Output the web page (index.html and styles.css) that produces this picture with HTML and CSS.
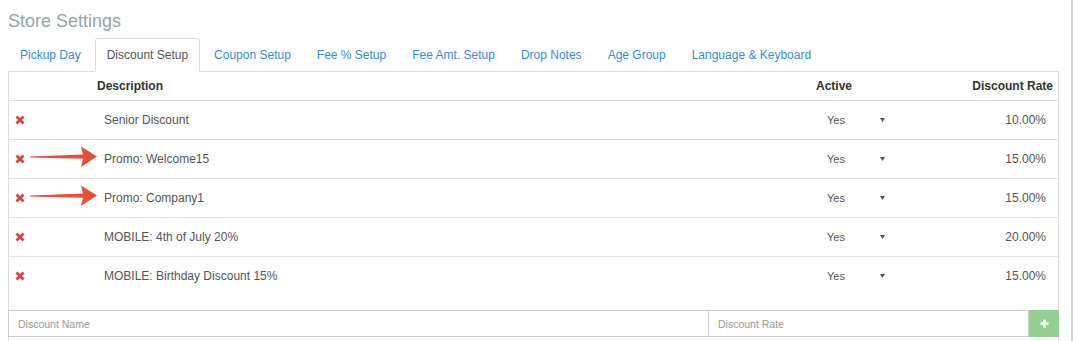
FILE: index.html
```html
<!DOCTYPE html>
<html lang="en">
<head>
    <meta charset="UTF-8">
    <title>Store Settings</title>
    <link rel="stylesheet" href="styles.css">
</head>
<body>
    <div class="page">
        <h1 class="title">Store Settings</h1>

        <ul class="tabs">
            <li><a href="#">Pickup Day</a></li>
            <li class="current"><a href="#">Discount Setup</a></li>
            <li><a href="#">Coupon Setup</a></li>
            <li><a href="#">Fee % Setup</a></li>
            <li><a href="#">Fee Amt. Setup</a></li>
            <li><a href="#">Drop Notes</a></li>
            <li><a href="#">Age Group</a></li>
            <li><a href="#">Language &amp; Keyboard</a></li>
        </ul>

        <div class="panel">
            <div class="row head">
                <div class="cell"></div>
                <div class="cell">Description</div>
                <div class="cell">Active</div>
                <div class="cell rate">Discount Rate</div>
            </div>

            <div class="row">
                <div class="cell del"><svg class="x" viewBox="0 0 10 10"><path d="M1.5 1.5 L8.5 8.5 M8.5 1.5 L1.5 8.5"/></svg></div>
                <div class="cell desc">Senior Discount</div>
                <div class="cell state"><span>Yes</span><svg class="caret" viewBox="0 0 5 4"><path d="M0 0 H5 L2.5 4 Z"/></svg></div>
                <div class="cell rate">10.00%</div>
            </div>

            <div class="row">
                <svg class="arrow" viewBox="0 0 68 22"><path d="M0 10.6 L53 8.6 L51 0.5 L67 10.6 L51 21 L53 12.8 L0 11.4 Z"/></svg>
                <div class="cell del"><svg class="x" viewBox="0 0 10 10"><path d="M1.5 1.5 L8.5 8.5 M8.5 1.5 L1.5 8.5"/></svg></div>
                <div class="cell desc">Promo: Welcome15</div>
                <div class="cell state"><span>Yes</span><svg class="caret" viewBox="0 0 5 4"><path d="M0 0 H5 L2.5 4 Z"/></svg></div>
                <div class="cell rate">15.00%</div>
            </div>

            <div class="row">
                <svg class="arrow" viewBox="0 0 68 22"><path d="M0 10.6 L53 8.6 L51 0.5 L67 10.6 L51 21 L53 12.8 L0 11.4 Z"/></svg>
                <div class="cell del"><svg class="x" viewBox="0 0 10 10"><path d="M1.5 1.5 L8.5 8.5 M8.5 1.5 L1.5 8.5"/></svg></div>
                <div class="cell desc">Promo: Company1</div>
                <div class="cell state"><span>Yes</span><svg class="caret" viewBox="0 0 5 4"><path d="M0 0 H5 L2.5 4 Z"/></svg></div>
                <div class="cell rate">15.00%</div>
            </div>

            <div class="row">
                <div class="cell del"><svg class="x" viewBox="0 0 10 10"><path d="M1.5 1.5 L8.5 8.5 M8.5 1.5 L1.5 8.5"/></svg></div>
                <div class="cell desc">MOBILE: 4th of July 20%</div>
                <div class="cell state"><span>Yes</span><svg class="caret" viewBox="0 0 5 4"><path d="M0 0 H5 L2.5 4 Z"/></svg></div>
                <div class="cell rate">20.00%</div>
            </div>

            <div class="row">
                <div class="cell del"><svg class="x" viewBox="0 0 10 10"><path d="M1.5 1.5 L8.5 8.5 M8.5 1.5 L1.5 8.5"/></svg></div>
                <div class="cell desc">MOBILE: Birthday Discount 15%</div>
                <div class="cell state"><span>Yes</span><svg class="caret" viewBox="0 0 5 4"><path d="M0 0 H5 L2.5 4 Z"/></svg></div>
                <div class="cell rate">15.00%</div>
            </div>

            <form class="add-form">
                <input type="text" class="name-input" placeholder="Discount Name">
                <input type="text" class="rate-input" placeholder="Discount Rate">
                <button type="button" class="add-btn">
                    <svg viewBox="0 0 10 10"><path d="M3.6 0.5 H6.4 V3.6 H9.5 V6.4 H6.4 V9.5 H3.6 V6.4 H0.5 V3.6 H3.6 Z"/></svg>
                </button>
            </form>
        </div>
    </div>
    <div class="edge"></div>
</body>
</html>
```

FILE: styles.css
```css
html, body {
    height: 100%;
}
body {
    margin: 0;
    font-family: "Liberation Sans", Arial, sans-serif;
    background-color: #fff;
    color: #555;
    display: flex;
    overflow: hidden;
}
.page {
    flex: 1;
    padding-left: 8px;
    margin-right: 12px;
    display: flex;
    flex-direction: column;
}
.edge {
    width: 2px;
    background-color: #d2d2d2;
}
.title {
    font-size: 18px;
    font-weight: normal;
    line-height: 22px;
    color: #95a5a6;
    margin: 10px 0 6px;
}

/* tabs */
.tabs {
    list-style: none;
    margin: 0;
    padding: 0;
    display: flex;
    border-bottom: 1px solid #ddd;
}
.tabs li {
    margin-right: 2px;
    margin-bottom: -1px;
}
.tabs a {
    display: block;
    padding: 9px 11px;
    font-size: 12px;
    line-height: 14px;
    color: #3a8bd1;
    text-decoration: none;
    border: 1px solid transparent;
    border-radius: 3px 3px 0 0;
}
.tabs .current a {
    color: #555;
    background-color: #fff;
    border-color: #ddd;
    border-bottom-color: #fff;
}

/* panel */
.panel {
    flex: 1;
    border-left: 1px solid #ddd;
    border-right: 1px solid #ddd;
}
.row {
    position: relative;
    display: grid;
    grid-template-columns: 81px 1fr 100px 149px;
    align-items: center;
    height: 38px;
    border-bottom: 1px solid #e3e3e3;
    font-size: 12px;
}
.row:last-of-type {
    border-bottom: none;
}
.cell.rate {
    text-align: right;
    padding-right: 12px;
}
.row.head {
    height: 28px;
    font-weight: bold;
    color: #333;
}
.head .cell {
    padding-left: 7px;
}
.head .cell.rate {
    padding-right: 5px;
}
.del {
    padding-left: 6px;
    display: flex;
}
.x {
    width: 10px;
    height: 10px;
}
.x path {
    stroke: #d8453e;
    stroke-width: 2.8;
    fill: none;
}
.desc {
    padding-left: 14px;
}
.state {
    display: flex;
    align-items: center;
    padding-left: 18px;
    font-size: 11px;
}
.caret {
    width: 5px;
    height: 4px;
    margin-left: 35px;
    fill: #555;
}
.arrow {
    position: absolute;
    left: 21px;
    top: 6px;
    width: 68px;
    height: 22px;
    fill: #e4503a;
}

/* add form */
.add-form {
    display: flex;
    margin: 15px -1px 0;
    height: 27px;
}
.add-form input {
    box-sizing: border-box;
    height: 27px;
    border: 1px solid #ccc;
    padding: 0 9px;
    font-family: "Liberation Sans", Arial, sans-serif;
    font-size: 10.5px;
    color: #555;
    outline: none;
}
.add-form input::placeholder {
    color: #999;
}
.name-input {
    width: 701px;
}
.rate-input {
    flex: 1;
    border-left: none !important;
}
.add-btn {
    width: 30px;
    height: 27px;
    border: none;
    padding: 0;
    background-color: #93d193;
    display: flex;
    align-items: center;
    justify-content: center;
}
.add-btn svg {
    width: 9px;
    height: 9px;
    fill: #fff;
}
```
